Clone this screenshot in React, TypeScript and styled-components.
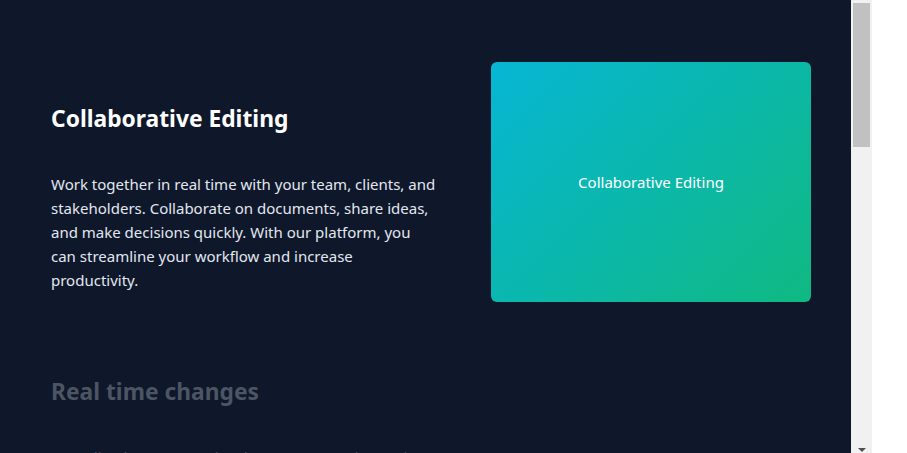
import React from "react";
import styled, { createGlobalStyle } from "styled-components";

const Global = createGlobalStyle`
  html, body { margin: 0; padding: 0; background: #ffffff; }
  * { box-sizing: border-box; }
`;

const Frame = styled.div`
  display: flex;
  width: 872px;
  height: 453px;
`;

const Page = styled.main`
  width: 851px;
  height: 453px;
  overflow: hidden;
  background: #0f172a;
  font-family: "Noto Sans", "Open Sans", sans-serif;
  display: flex;
  flex-direction: column;
  padding: 62px 40px 0 51px;
  gap: 33px;
`;

const Scrollbar = styled.div`
  width: 21px;
  height: 453px;
  background: #f1f1f1;
  display: flex;
  flex-direction: column;
  align-items: center;
  padding-top: 3px;
`;

const Thumb = styled.div`
  width: 17px;
  height: 144px;
  background: #c1c1c1;
`;

const Arrow = styled.div`
  margin-top: auto;
  margin-bottom: 1px;
  width: 0;
  height: 0;
  border-left: 4px solid transparent;
  border-right: 4px solid transparent;
  border-top: 4px solid #505050;
`;

const Section = styled.section`
  display: flex;
  align-items: flex-start;
  gap: 54px;
  flex: none;
`;

const TextCol = styled.div`
  width: 386px;
  padding-top: 41px;
  display: flex;
  flex-direction: column;
  gap: 37px;
`;

const Title = styled.h2<{ $muted?: boolean }>`
  margin: 0;
  font-size: 22.8px;
  line-height: 32px;
  font-weight: 700;
  color: ${(p) => (p.$muted ? "#4b5563" : "#ffffff")};
`;

const Body = styled.p<{ $muted?: boolean }>`
  margin: 0;
  font-size: 15px;
  line-height: 24px;
  color: ${(p) => (p.$muted ? "#4b5563" : "#e2e8f0")};
`;

const Card = styled.div`
  width: 320px;
  height: 240px;
  flex: none;
  border-radius: 6px;
  background: linear-gradient(135deg, #06b6d4 0%, #10b981 100%);
  display: flex;
  align-items: center;
  justify-content: center;
  color: #ffffff;
  font-size: 15px;
`;

const sections = [
  {
    title: "Collaborative Editing",
    body:
      "Work together in real time with your team, clients, and stakeholders. Collaborate on documents, share ideas, and make decisions quickly. With our platform, you can streamline your workflow and increase productivity.",
    card: true,
    muted: false,
  },
  {
    title: "Real time changes",
    body:
      "See edits the moment they happen. Every change is tracked and highlighted, so your whole team always knows what is new.",
    card: false,
    muted: true,
  },
];

export default function App() {
  return (
    <>
      <Global />
      <Frame>
        <Page>
          {sections.map((s) => (
            <Section key={s.title}>
              <TextCol>
                <Title $muted={s.muted}>{s.title}</Title>
                <Body $muted={s.muted}>{s.body}</Body>
              </TextCol>
              {s.card && <Card>{s.title}</Card>}
            </Section>
          ))}
        </Page>
        <Scrollbar aria-hidden>
          <Thumb />
          <Arrow />
        </Scrollbar>
      </Frame>
    </>
  );
}
